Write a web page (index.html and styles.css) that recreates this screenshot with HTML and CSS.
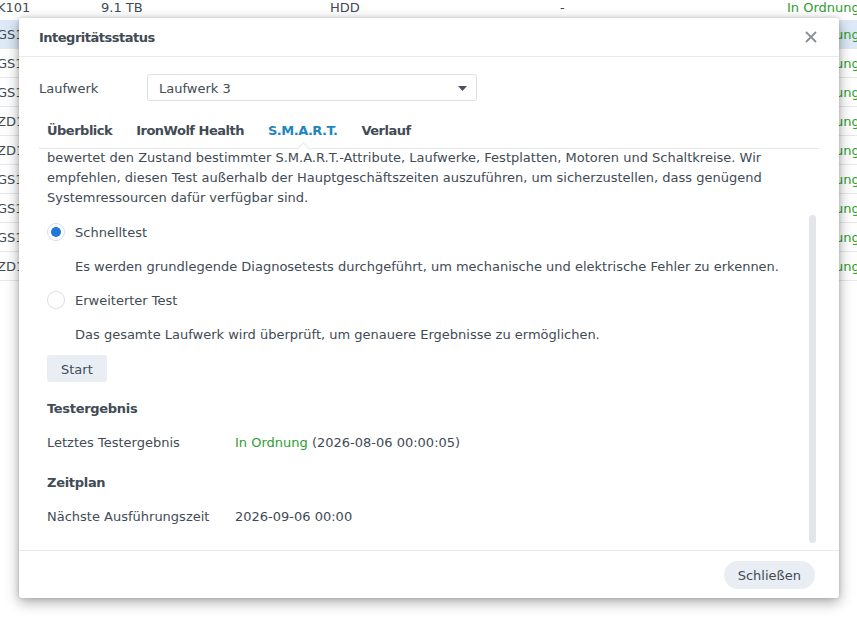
FILE: index.html
```html
<!DOCTYPE html>
<html lang="de">
<head>
<meta charset="utf-8">
<title>Integritätsstatus</title>
<link rel="stylesheet" href="styles.css">
</head>
<body>
<div class="bg">
  <div class="row first"><span class="c1">K101</span><span class="c2">9.1 TB</span><span class="c3">HDD</span><span class="c4">-</span><span class="c5 ok">In Ordnung</span></div>
  <div class="row sel"><span class="c1">GS1000</span><span class="c2">9.1 TB</span><span class="c3">HDD</span><span class="c4">-</span><span class="c5 ok">In Ordnung</span></div>
  <div class="row"><span class="c1">GS1000</span><span class="c2">9.1 TB</span><span class="c3">HDD</span><span class="c4">-</span><span class="c5 ok">In Ordnung</span></div>
  <div class="row"><span class="c1">GS1000</span><span class="c2">9.1 TB</span><span class="c3">HDD</span><span class="c4">-</span><span class="c5 ok">In Ordnung</span></div>
  <div class="row"><span class="c1">ZD1000</span><span class="c2">9.1 TB</span><span class="c3">HDD</span><span class="c4">-</span><span class="c5 ok">In Ordnung</span></div>
  <div class="row"><span class="c1">ZD1000</span><span class="c2">9.1 TB</span><span class="c3">HDD</span><span class="c4">-</span><span class="c5 ok">In Ordnung</span></div>
  <div class="row"><span class="c1">GS1000</span><span class="c2">9.1 TB</span><span class="c3">HDD</span><span class="c4">-</span><span class="c5 ok">In Ordnung</span></div>
  <div class="row"><span class="c1">GS1000</span><span class="c2">9.1 TB</span><span class="c3">HDD</span><span class="c4">-</span><span class="c5 ok">In Ordnung</span></div>
  <div class="row"><span class="c1">GS1000</span><span class="c2">9.1 TB</span><span class="c3">HDD</span><span class="c4">-</span><span class="c5 ok">In Ordnung</span></div>
  <div class="row"><span class="c1">ZD1000</span><span class="c2">9.1 TB</span><span class="c3">HDD</span><span class="c4">-</span><span class="c5 ok">In Ordnung</span></div>
</div>

<div class="modal">
  <div class="m-head">
    <span class="m-title">Integritätsstatus</span>
    <span class="m-close">
      <svg width="12" height="12" viewBox="0 0 12 12"><path d="M1.5 1.5 L10.5 10.5 M10.5 1.5 L1.5 10.5" stroke="#8a9097" stroke-width="1.8" stroke-linecap="round"/></svg>
    </span>
  </div>
  <div class="m-body">
    <div class="field">
      <span class="field-label">Laufwerk</span>
      <div class="select">
        <span>Laufwerk 3</span>
        <svg width="9" height="5" viewBox="0 0 9 5"><path d="M0 0 H9 L4.5 5 Z" fill="#4a525b"/></svg>
      </div>
    </div>
    <div class="tabs">
      <span class="tab">Überblick</span>
      <span class="tab">IronWolf Health</span>
      <span class="tab active">S.M.A.R.T.</span>
      <span class="tab">Verlauf</span>
    </div>
    <div class="scroll">
      <div class="content">
        <p class="intro">bewertet den Zustand bestimmter S.M.A.R.T.-Attribute, Laufwerke, Festplatten, Motoren und Schaltkreise. Wir empfehlen, diesen Test außerhalb der Hauptgeschäftszeiten auszuführen, um sicherzustellen, dass genügend Systemressourcen dafür verfügbar sind.</p>
        <label class="radio-row"><span class="radio checked"></span><span>Schnelltest</span></label>
        <p class="radio-desc">Es werden grundlegende Diagnosetests durchgeführt, um mechanische und elektrische Fehler zu erkennen.</p>
        <label class="radio-row second"><span class="radio"></span><span>Erweiterter Test</span></label>
        <p class="radio-desc">Das gesamte Laufwerk wird überprüft, um genauere Ergebnisse zu ermöglichen.</p>
        <button class="btn">Start</button>
        <h3 class="section">Testergebnis</h3>
        <div class="kv"><span class="k">Letztes Testergebnis</span><span class="v"><span class="ok">In Ordnung</span> (2026-08-06 00:00:05)</span></div>
        <h3 class="section later">Zeitplan</h3>
        <div class="kv"><span class="k">Nächste Ausführungszeit</span><span class="v">2026-09-06 00:00</span></div>
      </div>
      <div class="scrollbar"></div>
    </div>
  </div>
  <div class="m-foot">
    <button class="btn pill">Schließen</button>
  </div>
</div>
</body>
</html>
```

FILE: styles.css
```css
* { box-sizing: border-box; }
html, body { margin: 0; padding: 0; }
body {
  width: 857px;
  height: 620px;
  overflow: hidden;
  background: #ffffff;
  font-family: "DejaVu Sans", Verdana, sans-serif;
  font-size: 13px;
  color: #414b55;
  position: relative;
}

/* background table */
.bg { display: flex; flex-direction: column; overflow: hidden; width: 857px; }
.row {
  display: flex;
  height: 29px;
  align-items: center;
  border-bottom: 1px solid #e6e9ec;
  white-space: nowrap;
  overflow: hidden;
}
.row > span { flex: none; }
.row.first { height: 20px; align-items: flex-start; padding-top: 0; border-bottom: none; }
.row.sel { background: #dde9f6; }
.c1 { width: 104px; margin-left: -3px; }
.c2 { width: 229px; }
.c3 { width: 230px; }
.c4 { width: 227px; }
.c5 { width: 70px; overflow: hidden; }
.ok { color: #2e9e2e; }

/* modal */
.modal {
  position: absolute;
  left: 19px;
  top: 18px;
  width: 820px;
  height: 580px;
  background: #fff;
  border-radius: 3px;
  box-shadow: 0 4px 14px rgba(0,0,0,0.35), 0 0 4px rgba(0,0,0,0.15);
  display: flex;
  flex-direction: column;
}
.m-head {
  height: 39px;
  flex: none;
  display: flex;
  align-items: center;
  justify-content: space-between;
  padding: 0 22px 0 20px;
  border-bottom: 1px solid #e8ebee;
}
.m-title { font-weight: bold; color: #414b55; letter-spacing: -0.5px; }
.m-close { display: flex; }

.m-body {
  flex: 1;
  display: flex;
  flex-direction: column;
  padding: 17px 20px 0 20px;
  min-height: 0;
}
.field { display: flex; align-items: center; height: 27px; flex: none; }
.field-label { width: 108px; padding-top: 1px; }
.select {
  width: 330px;
  height: 27px;
  border: 1px solid #dde1e6;
  border-radius: 3px;
  display: flex;
  align-items: center;
  justify-content: space-between;
  padding: 1px 9px 0 11px;
}

.tabs {
  margin-top: 22px;
  display: flex;
  gap: 24px;
  padding: 0 8px 9px;
  line-height: 16px;
  border-bottom: 1px solid #e3e6ea;
  flex: none;
}
.tab { font-weight: bold; color: #414b55; letter-spacing: -0.5px; }
.tab.active { color: #1f86bd; position: relative; }
.tab.active::after {
  content: "";
  position: absolute;
  left: 50%;
  bottom: -14px;
  width: 8px;
  height: 8px;
  margin-left: -4px;
  background: #fff;
  border-left: 1px solid #e3e6ea;
  border-top: 1px solid #e3e6ea;
  transform: rotate(45deg);
}

.scroll {
  flex: 1;
  position: relative;
  overflow: hidden;
  min-height: 0;
}
.content { padding: 0 20px 0 8px; }
p { margin: 0; }
.intro { line-height: 20px; margin-top: -1px; }
.radio-row { display: flex; align-items: center; gap: 10px; margin-top: 14px; height: 20px; }
.radio-row.second { margin-top: 13px; }
.radio {
  width: 18px;
  height: 18px;
  border-radius: 50%;
  border: 1px solid #d9dde2;
  background: #fff;
  display: flex;
  align-items: center;
  justify-content: center;
}
.radio.checked { border-color: #cfe1f4; }
.radio.checked::after {
  content: "";
  width: 10px;
  height: 10px;
  border-radius: 50%;
  background: #1f78d6;
}
.radio-desc { margin: 15px 0 0 28px; line-height: 20px; }
.btn {
  font-family: inherit;
  font-size: 13px;
  color: #414b55;
  background: #e9eef4;
  border: none;
  border-radius: 3px;
  height: 27px;
  padding: 1px 14px 0;
  margin-top: 10px;
  display: block;
}
.section { font-size: 13px; font-weight: bold; margin: 19px 0 0; line-height: 16px; letter-spacing: -0.3px; }
.section.later { margin-top: 24px; }
.kv { display: flex; margin-top: 18px; line-height: 16px; }
.kv .k { width: 188px; }

.scrollbar {
  position: absolute;
  right: 3px;
  top: 66px;
  width: 7px;
  height: 328px;
  background: #e3e5e8;
  border-radius: 4px;
}

.m-foot {
  height: 48px;
  flex: none;
  border-top: 1px solid #e8ebee;
  display: flex;
  align-items: center;
  justify-content: flex-end;
  padding: 0 24px;
}
.btn.pill { border-radius: 14px; height: 28px; margin: 0; padding: 1px 14px 0; }
```
